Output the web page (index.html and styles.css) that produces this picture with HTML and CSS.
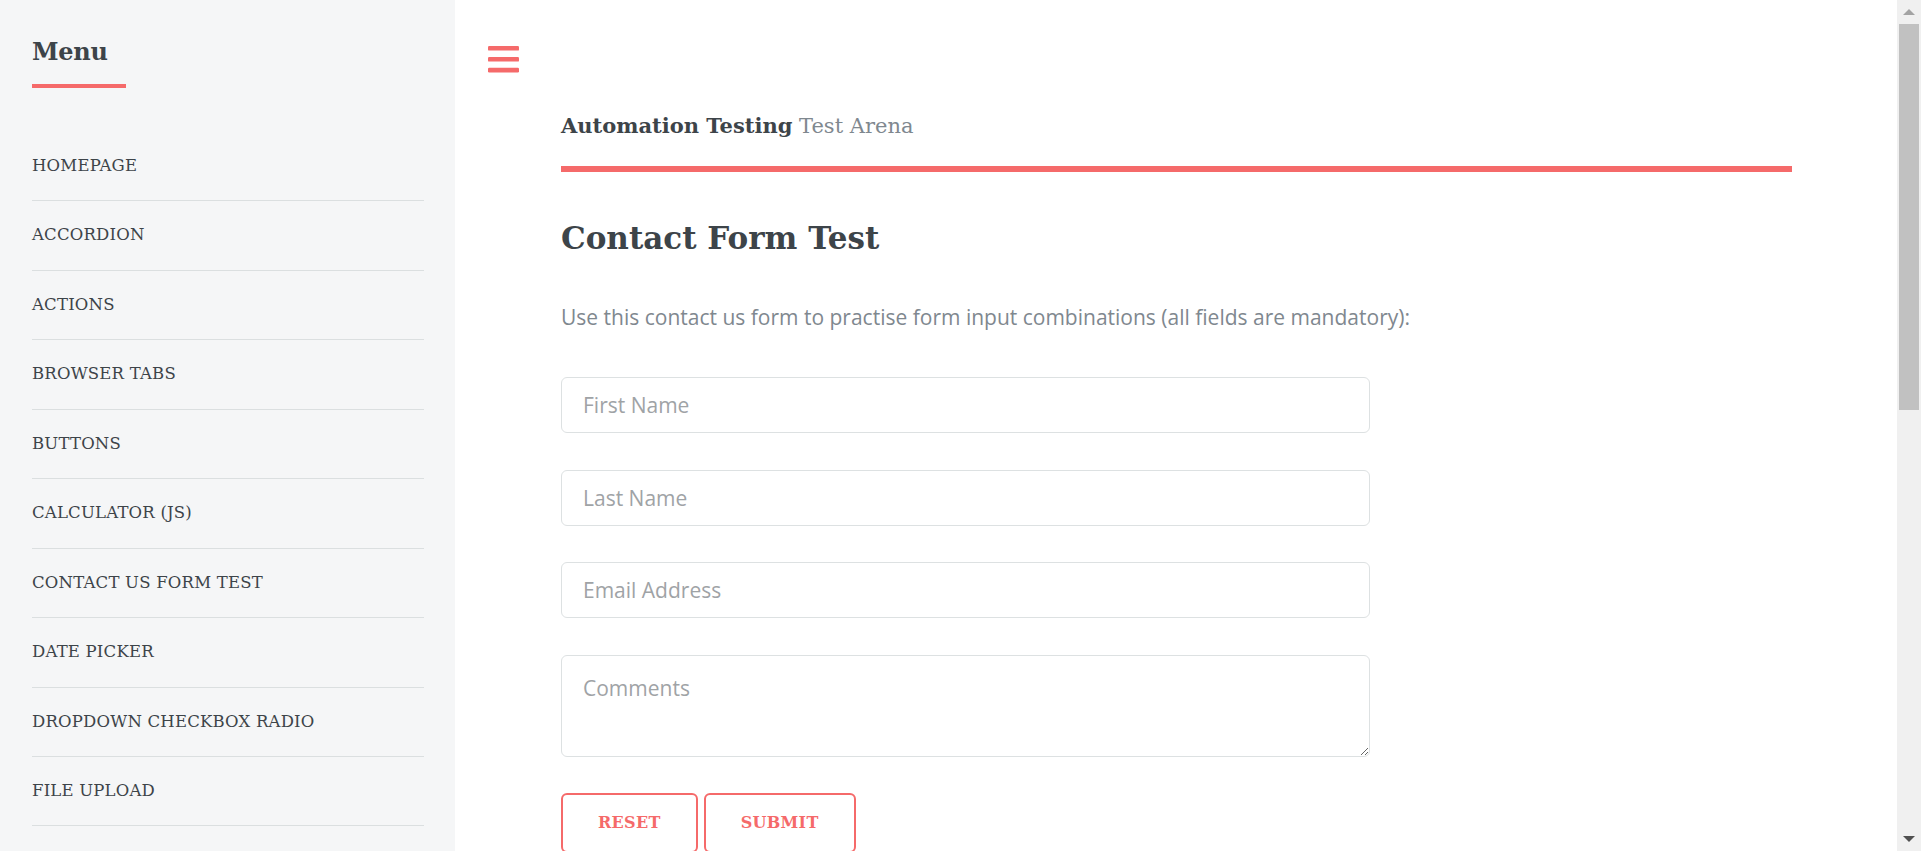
FILE: index.html
```html
<!DOCTYPE html>
<html lang="en">
<head>
<meta charset="utf-8">
<title>Contact Form Test | Automation Testing</title>
<link rel="stylesheet" href="styles.css">
</head>
<body>
<div class="wrapper">
  <aside class="sidebar">
    <div class="sidebar-inner">
      <nav class="menu">
        <header class="menu-header"><h2 class="menu-title">Menu</h2></header>
        <ul class="menu-list">
          <li><a href="#">Homepage</a></li>
          <li><a href="#">Accordion</a></li>
          <li><a href="#">Actions</a></li>
          <li><a href="#">Browser Tabs</a></li>
          <li><a href="#">Buttons</a></li>
          <li><a href="#">Calculator (JS)</a></li>
          <li><a href="#">Contact Us Form Test</a></li>
          <li><a href="#">Date Picker</a></li>
          <li><a href="#">Dropdown Checkbox Radio</a></li>
          <li><a href="#">File Upload</a></li>
          <li><a href="#">Hidden Elements</a></li>
          <li><a href="#">iFrames</a></li>
          <li><a href="#">Loader</a></li>
          <li><a href="#">Loader Two</a></li>
          <li><a href="#">JavaScript Alerts</a></li>
          <li><a href="#">Mouse Movement</a></li>
          <li><a href="#">Pop Ups</a></li>
          <li><a href="#">Predictive Search</a></li>
          <li><a href="#">Tables</a></li>
          <li><a href="#">Test Store</a></li>
          <li><a href="#">About Me</a></li>
        </ul>
      </nav>
      <footer class="sidebar-footer">
        <p>&copy; Automation Testing. All rights reserved.</p>
      </footer>
    </div>
  </aside>
  <main class="main">
    <a class="toggle" href="#" aria-label="Toggle menu">
      <svg viewBox="0 0 31 27" width="31" height="27" aria-hidden="true">
        <rect x="0" y="0" width="31" height="4.6" rx="1.2" fill="#f56a6a"/>
        <rect x="0" y="11" width="31" height="4.6" rx="1.2" fill="#f56a6a"/>
        <rect x="0" y="21.8" width="31" height="4.6" rx="1.2" fill="#f56a6a"/>
      </svg>
    </a>
    <div class="inner">
      <header class="site-header">
        <a class="logo" href="#"><strong>Automation Testing</strong> Test Arena</a>
      </header>
      <section class="content">
        <h2 class="page-title">Contact Form Test</h2>
        <p class="intro">Use this contact us form to practise form input combinations (all fields are mandatory):</p>
        <form class="contact-form">
          <div class="field"><input type="text" name="first_name" placeholder="First Name"></div>
          <div class="field"><input type="text" name="last_name" placeholder="Last Name"></div>
          <div class="field"><input type="email" name="email" placeholder="Email Address"></div>
          <div class="field"><textarea name="message" placeholder="Comments"></textarea></div>
          <div class="actions">
            <button type="reset" class="btn">Reset</button>
            <button type="submit" class="btn">Submit</button>
          </div>
        </form>
      </section>
    </div>
  </main>
</div>
<div class="scrollbar" aria-hidden="true">
  <div class="sb-button">
    <svg viewBox="0 0 12 6" width="12" height="6"><path d="M0 6L6 0L12 6Z" fill="#a3a3a3"/></svg>
  </div>
  <div class="sb-track"><div class="sb-thumb"></div></div>
  <div class="sb-button">
    <svg viewBox="0 0 12 6" width="12" height="6"><path d="M0 0L12 0L6 6Z" fill="#505050"/></svg>
  </div>
</div>
</body>
</html>
```

FILE: styles.css
```css
html {
  background: #ffffff;
}

body {
  margin: 0;
  background: #ffffff;
  color: #7f888f;
  font-family: "Open Sans", "Liberation Sans", sans-serif;
  font-size: 21px;
  line-height: 1.65;
}

.wrapper {
  display: flex;
  min-height: 100vh;
  margin-right: 24px;
}

/* Fake window scrollbar */
.scrollbar {
  position: fixed;
  top: 0;
  right: 0;
  width: 24px;
  height: 100vh;
  background: #f0f0f0;
  display: flex;
  flex-direction: column;
}

.sb-button {
  height: 24px;
  flex-shrink: 0;
  display: flex;
  align-items: center;
  justify-content: center;
}

.sb-button svg {
  display: block;
}

.sb-track {
  flex: 1;
  padding: 0 2px;
}

.sb-thumb {
  height: 386px;
  background: #c1c1c1;
}

/* Sidebar */
.sidebar {
  width: 455px;
  flex-shrink: 0;
  background: #f5f6f7;
}

.sidebar-inner {
  padding: 32px 31px 60px 32px;
}

.menu-title {
  display: block;
  width: fit-content;
  margin: 0;
  padding: 0 18px 13px 0;
  border-bottom: 4px solid #f56a6a;
  font-family: "DejaVu Serif", serif;
  font-weight: 700;
  font-size: 24px;
  line-height: 39px;
  letter-spacing: -0.3px;
  color: #3d4449;
}

.menu-list {
  list-style: none;
  margin: 44px 0 0;
  padding: 0;
}

.menu-list li + li {
  border-top: 1px solid #dbdfe0;
}

.menu-list a {
  display: block;
  font-family: "DejaVu Serif", serif;
  font-size: 16.5px;
  letter-spacing: 0.2px;
  line-height: 68.44px;
  text-transform: uppercase;
  color: #3d4449;
  text-decoration: none;
}

.sidebar-footer {
  margin-top: 52px;
}

.sidebar-footer p {
  margin: 0;
  font-size: 14px;
  color: #9fa3a6;
}

/* Main */
.main {
  flex: 1;
  min-width: 0;
  position: relative;
}

.toggle {
  position: absolute;
  left: 33px;
  top: 45.7px;
  width: 31px;
  height: 27px;
  display: block;
}

.toggle svg {
  display: block;
}

.inner {
  padding: 0 105px 0 106px;
}

.site-header {
  padding: 110px 0 24px;
  border-bottom: 6px solid #f56a6a;
}

.logo {
  display: block;
  font-family: "DejaVu Serif", serif;
  font-size: 21px;
  line-height: 31px;
  color: #7f888f;
  text-decoration: none;
}

.logo strong {
  font-weight: 700;
  color: #3d4449;
}

.page-title {
  margin: 42px 0 0;
  font-family: "DejaVu Serif", serif;
  font-weight: 700;
  font-size: 31px;
  line-height: 48px;
  color: #3d4449;
}

.intro {
  margin: 37.5px 0 0;
}

.contact-form {
  margin-top: 43px;
  width: 809px;
}

.field + .field {
  margin-top: 36.5px;
}

.field input,
.field textarea {
  display: block;
  box-sizing: border-box;
  width: 100%;
  margin: 0;
  border: 1px solid #dde1e2;
  border-radius: 6px;
  background: #ffffff;
  color: #3d4449;
  font-family: "Open Sans", "Liberation Sans", sans-serif;
  font-size: 21px;
  outline: none;
}

.field input {
  height: 56px;
  padding: 0 21px;
}

.field textarea {
  height: 102px;
  padding: 15.75px 21px;
  line-height: 1.65;
  resize: vertical;
}

.field input::placeholder,
.field textarea::placeholder {
  color: #9fa3a6;
  opacity: 1;
}

.actions {
  display: flex;
  gap: 6px;
  margin-top: 36px;
}

.btn {
  box-sizing: border-box;
  height: 60px;
  padding: 0 35px;
  border: 2px solid #f56a6a;
  border-radius: 6px;
  background: transparent;
  color: #f56a6a;
  font-family: "DejaVu Serif", serif;
  font-weight: 700;
  font-size: 16px;
  letter-spacing: 0.3px;
  text-transform: uppercase;
  cursor: pointer;
}
```
